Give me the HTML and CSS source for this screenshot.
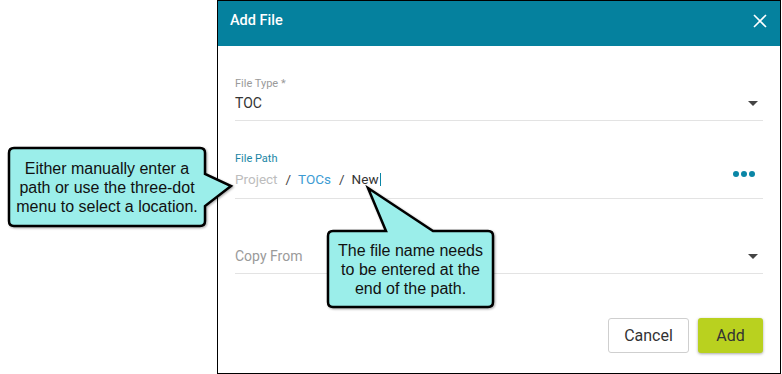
FILE: index.html
```html
<!DOCTYPE html>
<html>
<head>
<meta charset="utf-8">
<title>Add File</title>
<link rel="stylesheet" href="styles.css">
</head>
<body>
<div class="page">
  <div class="dialog">
    <div class="header">
      <div class="title">Add File</div>
      <svg class="close" width="14" height="14" viewBox="0 0 14 14"><path d="M1 1 L13 13 M13 1 L1 13" stroke="#fff" stroke-width="1.6" fill="none"/></svg>
    </div>
    <div class="body">
      <div class="field">
        <div class="label">File Type *</div>
        <div class="row">
          <span class="value">TOC</span>
          <span class="caret"></span>
        </div>
      </div>
      <div class="field field-path">
        <div class="label label-active">File Path</div>
        <div class="row">
          <span class="crumb-muted">Project</span><span class="sep">/</span><span class="crumb-link">TOCs</span><span class="sep">/</span><span class="value">New</span><span class="cursor"></span>
          <svg class="dots" width="22" height="6" viewBox="0 0 22 6"><circle cx="3" cy="3" r="3" fill="#0a86a6"/><circle cx="11" cy="3" r="3" fill="#0a86a6"/><circle cx="19" cy="3" r="3" fill="#0a86a6"/></svg>
        </div>
      </div>
      <div class="field">
        <div class="label"></div>
        <div class="row">
          <span class="placeholder">Copy From</span>
          <span class="caret"></span>
        </div>
      </div>
      <div class="actions">
        <button class="btn btn-cancel">Cancel</button>
        <button class="btn btn-add">Add</button>
      </div>
    </div>
  </div>
  <div class="callout callout-left">
    <svg class="callout-shape" width="196" height="78" viewBox="0 0 196 78"><path d="M5 0 H191 Q196 0 196 5 V26 L222 38 L196 58 V73 Q196 78 191 78 H5 Q0 78 0 73 V5 Q0 0 5 0 Z"/></svg>
    <div class="callout-text">Either manually enter a<br>path or use the three-dot<br>menu to select a location.</div>
  </div>
  <div class="callout callout-bottom">
    <svg class="callout-shape" width="165" height="76" viewBox="0 0 165 76"><path d="M5 0 H58 L40 -43 L105 0 H160 Q165 0 165 5 V71 Q165 76 160 76 H5 Q0 76 0 71 V5 Q0 0 5 0 Z"/></svg>
    <div class="callout-text">The file name needs<br>to be entered at the<br>end of the path.</div>
  </div>
</div>
</body>
</html>
```
FILE: styles.css
```css
html, body {
  margin: 0;
  padding: 0;
  background: #fff;
}
.page {
  position: relative;
  width: 782px;
  height: 374px;
  display: flex;
  padding-left: 217px;
  box-sizing: border-box;
  font-family: Roboto, "Liberation Sans", sans-serif;
}
.dialog {
  width: 564px;
  height: 374px;
  box-sizing: border-box;
  border: 1px solid #000;
  display: flex;
  flex-direction: column;
  background: #fff;
}
.header {
  height: 45px;
  flex: none;
  background: #05819e;
  display: flex;
  align-items: flex-start;
  justify-content: space-between;
  padding: 10px 13px 0 12px;
  box-sizing: border-box;
}
.title {
  color: #fff;
  font-size: 14.5px;
  line-height: 20px;
  font-weight: 500;
}
.close {
  margin-top: 3px;
  display: block;
}
.body {
  padding: 0 17px;
  display: flex;
  flex-direction: column;
}
.field {
  margin-top: 31px;
  border-bottom: 1px solid #e3e3e3;
  padding-bottom: 7px;
}
.label {
  font-size: 11px;
  line-height: 13px;
  height: 13px;
  color: #9a9a9a;
}
.label-active {
  color: #1a86a5;
}
.row {
  display: flex;
  align-items: center;
  margin-top: 3px;
  height: 20px;
  font-size: 14px;
  line-height: 20px;
}
.field-path {
  padding-bottom: 9px;
}
.field-path .row {
  margin-top: 4px;
  font-size: 13.5px;
}
.value {
  color: #333;
}
.placeholder {
  color: #9a9a9a;
}
.caret {
  margin-left: auto;
  margin-right: 5px;
  width: 0;
  height: 0;
  border-left: 5px solid transparent;
  border-right: 5px solid transparent;
  border-top: 5px solid #444;
}
.crumb-muted {
  color: #bdbdbd;
}
.crumb-link {
  color: #3d9bd3;
}
.sep {
  color: #444;
  margin: 0 7px 0 8px;
}
.cursor {
  display: inline-block;
  width: 1px;
  height: 13px;
  background: #0a86a6;
  margin-left: 1px;
}
.dots {
  margin-left: auto;
  margin-right: 8px;
  align-self: flex-start;
  margin-top: 2px;
  display: block;
}
.actions {
  margin-top: 44px;
  display: flex;
  justify-content: flex-end;
  gap: 9px;
}
.btn {
  height: 35px;
  box-sizing: border-box;
  font-family: Roboto, "Liberation Sans", sans-serif;
  font-size: 16px;
  color: #333;
  border-radius: 3px;
  cursor: pointer;
}
.btn-cancel {
  width: 81px;
  background: #fff;
  border: 1px solid #cfcfcf;
}
.btn-add {
  width: 65px;
  background: #b9d11f;
  border: none;
  box-shadow: 0 1px 3px rgba(0, 0, 0, 0.35);
}
.callout {
  position: absolute;
  display: flex;
  align-items: center;
  justify-content: center;
}
.callout-left {
  left: 9px;
  top: 148px;
  width: 196px;
  height: 78px;
}
.callout-bottom {
  left: 328px;
  top: 231px;
  width: 165px;
  height: 76px;
}
.callout-shape {
  position: absolute;
  left: 0;
  top: 0;
  overflow: visible;
  filter: drop-shadow(1px 1px 1px rgba(0, 0, 0, 0.35));
}
.callout-shape path {
  fill: #9beeea;
  stroke: #000;
  stroke-width: 2.5;
  stroke-linejoin: miter;
}
.callout-text {
  position: relative;
  font-family: "Liberation Sans", Arial, sans-serif;
  font-size: 16px;
  line-height: 19px;
  color: #111;
  text-align: center;
  white-space: nowrap;
}
```
